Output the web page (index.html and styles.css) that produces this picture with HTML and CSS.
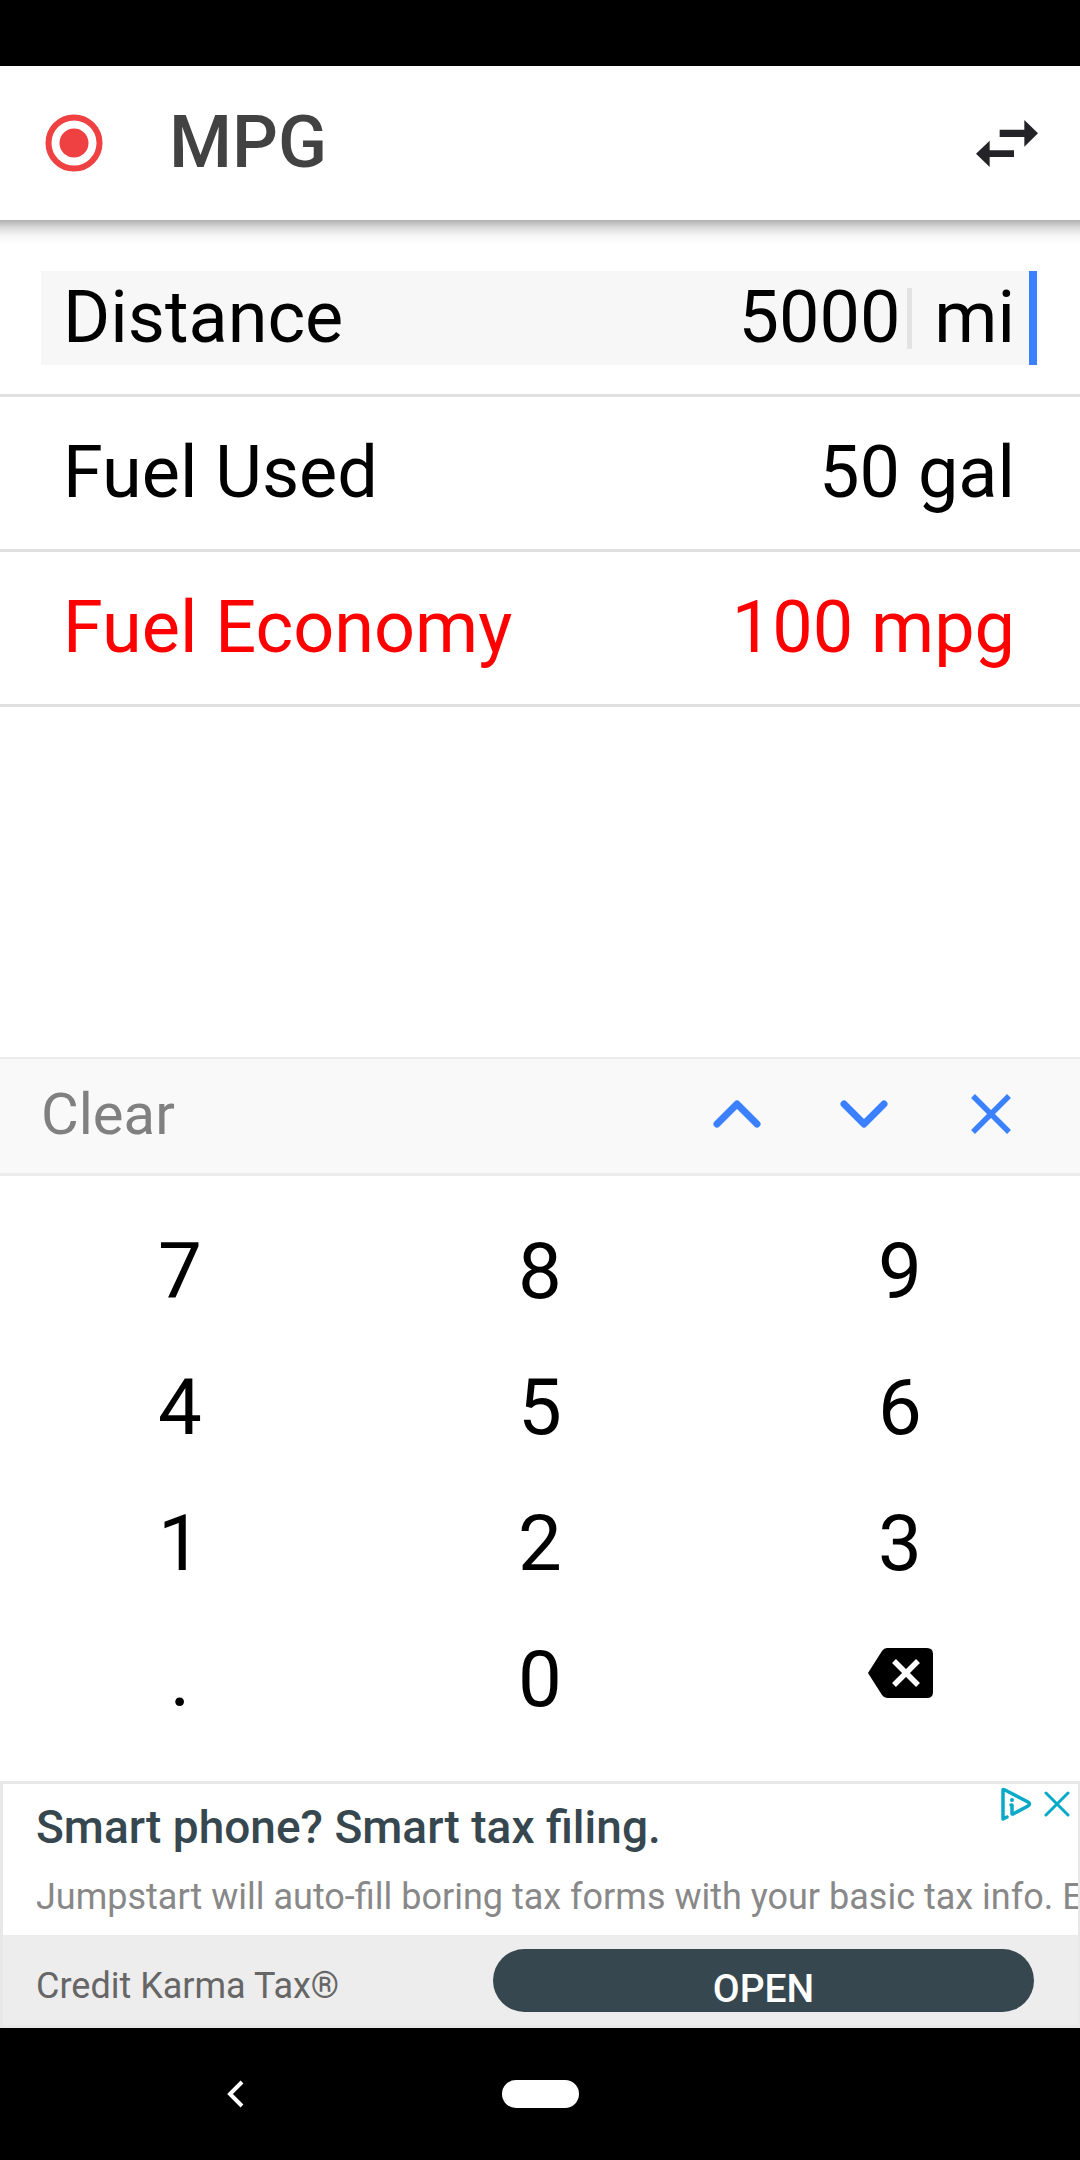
FILE: index.html
```html
<!DOCTYPE html>
<html lang="en">
<head>
<meta charset="utf-8">
<meta name="viewport" content="width=device-width, initial-scale=1">
<title>MPG</title>
<link rel="stylesheet" href="styles.css">
</head>
<body>
<div class="screen">
  <div class="status-bar"></div>
  <header class="app-bar">
    <svg class="logo" viewBox="0 0 58 58" aria-hidden="true"><circle cx="29" cy="29" r="25.5" fill="none" stroke="#ef4141" stroke-width="6"/><circle cx="29" cy="29" r="14.5" fill="#ef4141"/></svg>
    <h1 class="title">MPG</h1>
    <button class="icon-button" type="button" aria-label="Swap units">
      <svg class="swap" viewBox="0 0 186 141" aria-hidden="true"><path fill="#242428" d="M71 29H145V0L186 40L145 80V51H71ZM114 91V111H41V141L0 101L41 62V91Z"/></svg>
    </button>
  </header>

  <main class="fields">
    <div class="row">
      <div class="field field-active">
        <label for="distance">Distance</label>
        <input id="distance" type="text" value="5000">
        <span class="caret"></span>
        <span>mi</span>
      </div>
    </div>
    <div class="row">
      <div class="field">
        <label for="fuel">Fuel Used</label>
        <input id="fuel" type="text" value="50">
        <span class="unit">gal</span>
      </div>
    </div>
    <div class="row">
      <div class="field field-result">
        <label for="economy">Fuel Economy</label>
        <output id="economy">100 mpg</output>
      </div>
    </div>
  </main>

  <div class="toolbar">
    <button class="clear" type="button">Clear</button>
    <div class="toolbar-actions">
      <button class="icon-button" type="button" aria-label="Previous field"><svg class="tool-icon" viewBox="0 0 48 48"><path d="M4 34L24 14L44 34" stroke-linecap="round" stroke-linejoin="round"/></svg></button>
      <button class="icon-button" type="button" aria-label="Next field"><svg class="tool-icon" viewBox="0 0 48 48"><path d="M4 14L24 34L44 14" stroke-linecap="round" stroke-linejoin="round"/></svg></button>
      <button class="icon-button" type="button" aria-label="Close keypad"><svg class="tool-icon" viewBox="0 0 48 48"><path d="M6 6L42 42M42 6L6 42" stroke-width="5.5"/></svg></button>
    </div>
  </div>

  <div class="keypad">
    <button type="button">7</button>
    <button type="button">8</button>
    <button type="button">9</button>
    <button type="button">4</button>
    <button type="button">5</button>
    <button type="button">6</button>
    <button type="button">1</button>
    <button type="button">2</button>
    <button type="button">3</button>
    <button type="button">.</button>
    <button type="button">0</button>
    <button class="key-delete" type="button" aria-label="Delete"><svg viewBox="0 0 65 50"><path d="M19 0H59Q65 0 65 6V44Q65 50 59 50H19Q16 50 14 47L0 25L14 3Q16 0 19 0Z"/><path d="M26 13L50 37M50 13L26 37" fill="none" stroke="#fff" stroke-width="5.5"/></svg></button>
  </div>

  <aside class="ad">
    <div class="ad-copy">
      <h2 class="ad-title">Smart phone? Smart tax filing.</h2>
      <p class="ad-text">Jumpstart will auto-fill boring tax forms with your basic tax info. Ea</p>
      <div class="ad-choices">
        <a href="#" aria-label="Ad choices"><svg class="ad-info" viewBox="0 0 32 34"><g fill="none" stroke="#09aac8" stroke-linecap="round" stroke-linejoin="round"><path stroke-width="3.5" d="M7 30L3 32V3Q3 2 5 3L28 15Q31 17 28 19L13 27"/><path stroke-width="3.5" d="M11 18H12V27"/></g><circle cx="12" cy="13" r="2" fill="#09aac8"/></svg></a>
        <button class="icon-button" type="button" aria-label="Close ad"><svg class="ad-close" viewBox="0 0 26 26"><path fill="none" stroke="#09aac8" stroke-width="3" stroke-linecap="round" d="M2 2L24 24M24 2L2 24"/></svg></button>
      </div>
    </div>
    <div class="ad-footer">
      <span class="ad-brand">Credit Karma Tax®</span>
      <button class="ad-open" type="button">OPEN</button>
    </div>
  </aside>

  <nav class="nav-bar">
    <button class="icon-button" type="button" aria-label="Back"><svg class="back" viewBox="0 0 18 28"><path fill="none" stroke="#fff" stroke-width="4" d="M16 2L4 14L16 26"/></svg></button>
    <button class="home" type="button" aria-label="Home"></button>
  </nav>
</div>
</body>
</html>
```
FILE: styles.css
```css
* {
  box-sizing: border-box;
}

body {
  margin: 0;
  background: #fff;
  color: #000;
  font-family: Roboto, "Liberation Sans", sans-serif;
}

button,
input {
  margin: 0;
  padding: 0;
  border: 0;
  background: none;
  color: inherit;
  font: inherit;
}

svg {
  display: block;
}

.screen {
  display: flex;
  flex-direction: column;
  min-height: 100vh;
}

.status-bar {
  height: 66px;
  background: #000;
}

.app-bar {
  display: flex;
  align-items: center;
  height: 154px;
  padding: 0 42px 0 45px;
}

.logo {
  width: 58px;
  height: 58px;
}

.title {
  flex: 1;
  margin: 0;
  padding-left: 66px;
  color: #424242;
  font-size: 72px;
  font-weight: 500;
  line-height: 80px;
}

.swap {
  width: 62px;
  height: 47px;
}

.fields {
  flex: 1;
  padding-top: 22px;
  background: linear-gradient(#b0b0b0, #dcdcdc 8px, #f6f6f6 16px, #fff 24px);
}

.row {
  display: flex;
  align-items: center;
  height: 155px;
  padding: 0 43px 0 41px;
  border-bottom: 3px solid #e0e0e0;
}

.field {
  display: flex;
  flex: 1;
  align-items: center;
  min-width: 0;
  padding: 0 14px 0 22px;
  border-right: 8px solid transparent;
  font-size: 72px;
  line-height: 94px;
}

.field-active {
  background: #f7f7f7;
  border-right-color: #3b80ff;
}

.field-result {
  justify-content: space-between;
  color: #f00;
}

.field input {
  flex: 1;
  min-width: 0;
  height: 94px;
  text-align: right;
}

.caret {
  width: 5px;
  height: 61px;
  margin: 0 22px 0 7px;
  background: #e3e3e3;
}

.unit {
  margin-left: 18px;
}

.toolbar {
  display: flex;
  align-items: center;
  justify-content: space-between;
  height: 119px;
  padding: 0 65px 4px 41px;
  border-top: 2px solid #ececec;
  border-bottom: 3px solid #ececec;
  background: #f9f9f9;
}

.clear {
  color: #808080;
  font-size: 58px;
  line-height: 68px;
}

.toolbar-actions {
  display: flex;
  gap: 79px;
}

.tool-icon {
  width: 48px;
  height: 48px;
  fill: none;
  stroke: #3b80ff;
  stroke-width: 7;
}

.keypad {
  display: grid;
  grid-template-columns: repeat(3, 1fr);
  grid-auto-rows: 136px;
  padding: 27px 0 34px;
  font-size: 78px;
}

.key-delete {
  display: flex;
  align-items: center;
  justify-content: center;
  padding-bottom: 12px;
}

.key-delete svg {
  width: 65px;
  height: 50px;
}

.ad {
  border: 3px solid #e8e8e8;
  border-width: 3px 2px 3px 3px;
}

.ad-copy {
  position: relative;
  height: 151px;
  padding: 16px 0 0 33px;
  overflow: hidden;
}

.ad-title {
  margin: 0;
  color: #37474f;
  font-size: 46px;
  font-weight: 500;
  line-height: 54px;
}

.ad-text {
  margin: 0;
  padding-top: 22px;
  overflow: hidden;
  color: #888;
  font-size: 36px;
  line-height: 42px;
  white-space: nowrap;
}

.ad-choices {
  position: absolute;
  top: 3px;
  right: 8px;
  display: flex;
  align-items: center;
  gap: 12px;
}

.ad-info {
  width: 32px;
  height: 34px;
}

.ad-close {
  width: 26px;
  height: 26px;
}

.ad-footer {
  display: flex;
  align-items: center;
  height: 90px;
  padding: 0 44px 0 33px;
  background: #ededed;
}

.ad-brand {
  flex: 1;
  padding-top: 12px;
  color: #666;
  font-size: 36px;
}

.ad-open {
  width: 541px;
  height: 63px;
  padding-top: 18px;
  border-radius: 32px;
  background: #37474f;
  color: #fff;
  font-size: 39px;
  font-weight: 500;
  line-height: 44px;
}

.nav-bar {
  display: grid;
  grid-template-columns: 1fr auto 1fr;
  align-items: center;
  height: 132px;
  background: #000;
}

.nav-bar .icon-button {
  justify-self: center;
  margin-right: 32px;
}

.back {
  width: 18px;
  height: 28px;
}

.home {
  width: 77px;
  height: 28px;
  border-radius: 14px;
  background: #fff;
}
```
